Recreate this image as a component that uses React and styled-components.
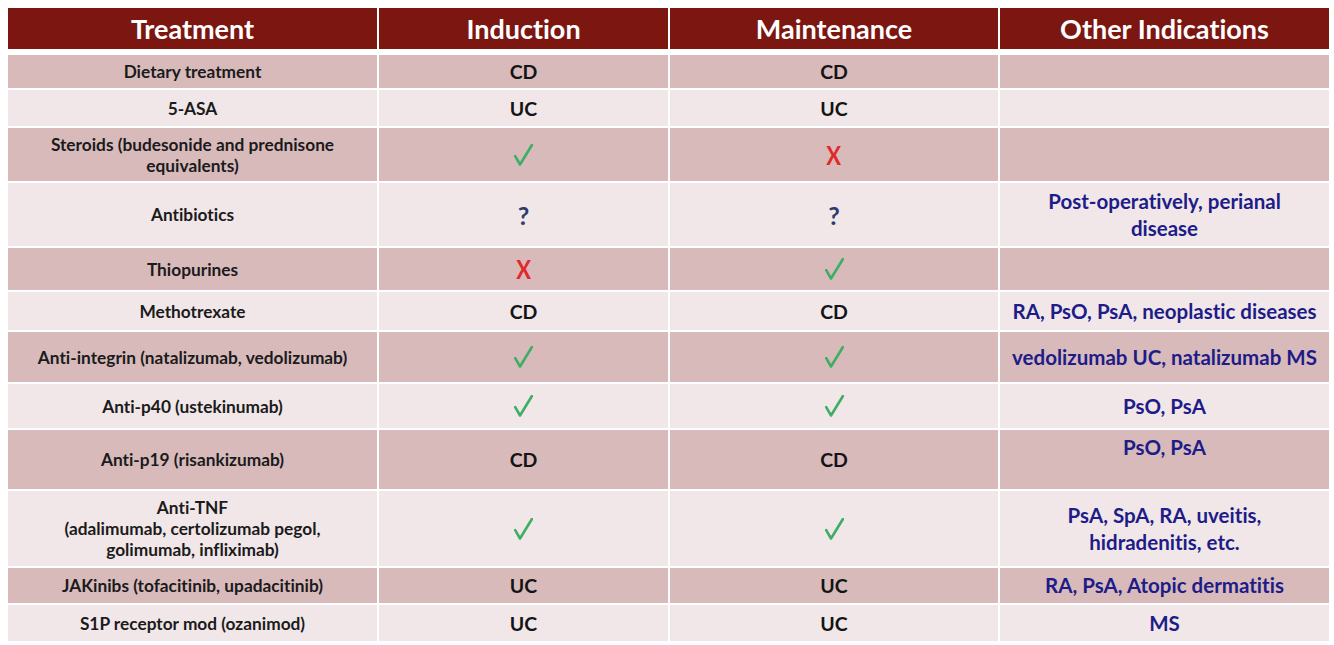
import styled, { createGlobalStyle } from "styled-components";

const GlobalStyle = createGlobalStyle`
  html, body {
    margin: 0;
    padding: 0;
    background: #ffffff;
  }
  body {
    font-family: Lato, "Open Sans", "Liberation Sans", sans-serif;
    font-variant-ligatures: none;
    font-feature-settings: "liga" 0, "clig" 0;
  }
`;

const Page = styled.div`
  width: 1334px;
  height: 645px;
  padding: 8px 0 0 8px;
  box-sizing: border-box;
  background: #ffffff;
`;

const Table = styled.div`
  display: grid;
  grid-template-columns: 369px 289px 328px 329px;
  grid-template-rows: ${(p) => p.$rows};
  column-gap: 2px;
  row-gap: 2px;
  width: 1321px;
`;

const HeaderCell = styled.div`
  background: #7b1611;
  color: #ffffff;
  font-weight: 700;
  font-size: 27px;
  display: flex;
  align-items: center;
  justify-content: center;
  margin-bottom: 4px;
`;

const Cell = styled.div`
  background: ${(p) => (p.$odd ? "#d8babb" : "#f1e7e9")};
  display: flex;
  align-items: ${(p) => (p.$top ? "flex-start" : "center")};
  justify-content: center;
  text-align: center;
  padding: ${(p) => (p.$top ? "4px 4px 0" : "0 4px")};
  box-sizing: border-box;
`;

const Drug = styled.span`
  font-weight: 700;
  font-size: 17.3px;
  line-height: 21px;
  color: #1b1b1b;
`;

const Code = styled.span`
  font-weight: 700;
  font-size: 19.5px;
  color: #141414;
`;

const Cross = styled.span`
  font-weight: 700;
  font-size: 26px;
  color: #e0292b;
  display: inline-block;
  transform: scaleX(0.85);
`;

const Question = styled.span`
  font-weight: 700;
  font-size: 25px;
  color: #2e3c6c;
`;

const Other = styled.span`
  font-weight: 700;
  font-size: 20.5px;
  line-height: 27px;
  color: #1d1c88;
`;

const CheckSvg = styled.svg`
  width: 19px;
  height: 22px;
  display: block;
`;

const Check = () => (
  <CheckSvg viewBox="0 0 19 22">
    <path
      d="M1.2 12.2 L6 20.5 L17.8 1.2"
      fill="none"
      stroke="#3dae63"
      strokeWidth="2.6"
      strokeLinecap="round"
      strokeLinejoin="round"
    />
  </CheckSvg>
);

const Mark = ({ v }) => {
  if (v === "ok") return <Check />;
  if (v === "no") return <Cross>X</Cross>;
  if (v === "?") return <Question>?</Question>;
  return <Code>{v}</Code>;
};

const lines = (arr) =>
  arr.map((l, i) => (
    <span key={i}>
      {i > 0 && <br />}
      {l}
    </span>
  ));

const rows = [
  { h: 33, name: ["Dietary treatment"], ind: "CD", main: "CD", other: [] },
  { h: 36, name: ["5-ASA"], ind: "UC", main: "UC", other: [] },
  {
    h: 53,
    name: ["Steroids (budesonide and prednisone", "equivalents)"],
    ind: "ok",
    main: "no",
    other: [],
  },
  {
    h: 63,
    name: ["Antibiotics"],
    ind: "?",
    main: "?",
    other: ["Post-operatively, perianal", "disease"],
  },
  { h: 42, name: ["Thiopurines"], ind: "no", main: "ok", other: [] },
  {
    h: 38,
    name: ["Methotrexate"],
    ind: "CD",
    main: "CD",
    other: ["RA, PsO, PsA, neoplastic diseases"],
  },
  {
    h: 50,
    name: ["Anti-integrin (natalizumab, vedolizumab)"],
    ind: "ok",
    main: "ok",
    other: ["vedolizumab UC, natalizumab MS"],
  },
  {
    h: 44,
    name: ["Anti-p40 (ustekinumab)"],
    ind: "ok",
    main: "ok",
    other: ["PsO, PsA"],
  },
  {
    h: 59,
    name: ["Anti-p19 (risankizumab)"],
    ind: "CD",
    main: "CD",
    other: ["PsO, PsA"],
    top: true,
  },
  {
    h: 75,
    name: [
      "Anti-TNF",
      "(adalimumab, certolizumab pegol,",
      "golimumab, infliximab)",
    ],
    ind: "ok",
    main: "ok",
    other: ["PsA, SpA, RA, uveitis,", "hidradenitis, etc."],
  },
  {
    h: 35,
    name: ["JAKinibs (tofacitinib, upadacitinib)"],
    ind: "UC",
    main: "UC",
    other: ["RA, PsA, Atopic dermatitis"],
  },
  {
    h: 36,
    name: ["S1P receptor mod (ozanimod)"],
    ind: "UC",
    main: "UC",
    other: ["MS"],
  },
];

const headers = ["Treatment", "Induction", "Maintenance", "Other Indications"];

const App = () => {
  const template = ["45px", ...rows.map((r) => `${r.h}px`)].join(" ");
  return (
    <Page>
      <GlobalStyle />
      <Table $rows={template}>
        {headers.map((h) => (
          <HeaderCell key={h}>{h}</HeaderCell>
        ))}
        {rows.map((r, i) => {
          const odd = i % 2 === 0;
          return [
            <Cell key={`n${i}`} $odd={odd}>
              <Drug>{lines(r.name)}</Drug>
            </Cell>,
            <Cell key={`i${i}`} $odd={odd}>
              <Mark v={r.ind} />
            </Cell>,
            <Cell key={`m${i}`} $odd={odd}>
              <Mark v={r.main} />
            </Cell>,
            <Cell key={`o${i}`} $odd={odd} $top={r.top}>
              <Other>{lines(r.other)}</Other>
            </Cell>,
          ];
        })}
      </Table>
    </Page>
  );
};

export default App;
